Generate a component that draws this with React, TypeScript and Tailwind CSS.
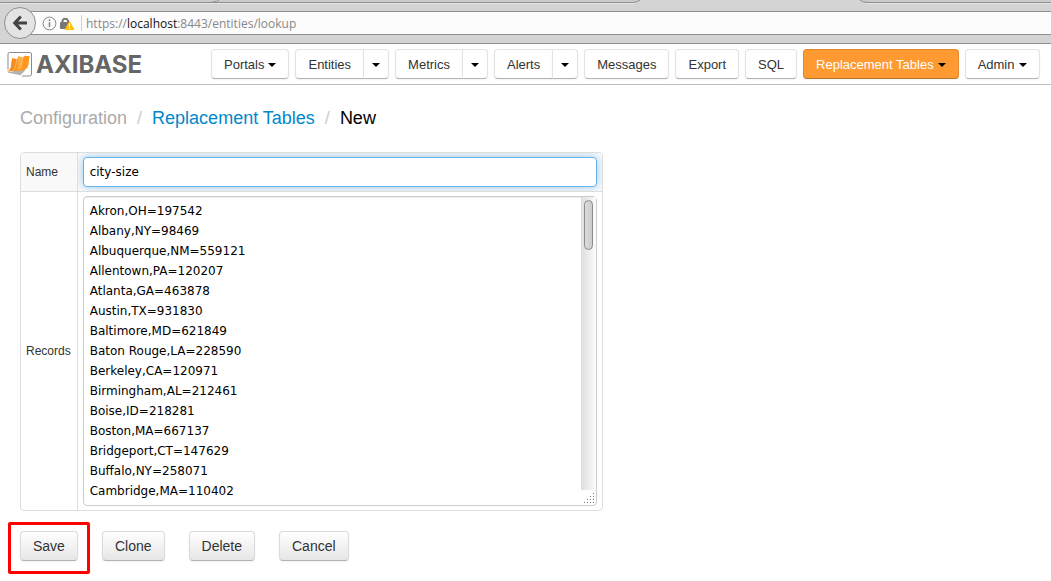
import React, { type ReactNode } from "react";

const records = [
  "Akron,OH=197542",
  "Albany,NY=98469",
  "Albuquerque,NM=559121",
  "Allentown,PA=120207",
  "Atlanta,GA=463878",
  "Austin,TX=931830",
  "Baltimore,MD=621849",
  "Baton Rouge,LA=228590",
  "Berkeley,CA=120971",
  "Birmingham,AL=212461",
  "Boise,ID=218281",
  "Boston,MA=667137",
  "Bridgeport,CT=147629",
  "Buffalo,NY=258071",
  "Cambridge,MA=110402",
].join("\n");

function Caret() {
  return <span aria-hidden="true" className="inline-block border-x-4 border-t-4 border-x-transparent border-t-black" />;
}

const navBase = "flex h-[30px] items-center gap-1 border pt-px text-[13px] leading-5 shadow-[0_1px_2px_rgba(0,0,0,0.05)]";
const navPlain = "border-[#e2e2e2] border-b-[#b3b3b3] bg-white text-[#333]";

function NavButton({ children, caret, active }: { children: ReactNode; caret?: boolean; active?: boolean }) {
  return (
    <button
      type="button"
      className={`${navBase} rounded px-3 ${active ? "border-[#e2892f] border-b-[#b3742f] bg-[#ff9a33] text-white" : navPlain}`}
    >
      {children}
      {caret && <Caret />}
    </button>
  );
}

function SplitButton({ children }: { children: string }) {
  return (
    <div className="flex">
      <button type="button" className={`${navBase} ${navPlain} rounded-l px-3`}>{children}</button>
      <button type="button" aria-label={`${children} menu`} className={`${navBase} ${navPlain} -ml-px rounded-r px-2`}>
        <Caret />
      </button>
    </div>
  );
}

function BrowserBar() {
  return (
    <div className="relative h-11 border-b border-[#8f8f8f] bg-[#d4d4d4] pt-[11px]">
      <svg aria-hidden="true" className="absolute left-0 top-0 h-1 w-full overflow-hidden" fill="none">
        <path d="M0 0H640L634 2.500H0zM860 0H2400V2.500H866z" fill="#cbcbcb" />
        <path d="M0 3.500H634M866 3.500H2400" stroke="#e6e6e6" />
        <path d="M0 2.500H632Q637 2.500 640 0M860 0Q863 2.500 868 2.500H2400" stroke="#8c8f91" />
        <path d="M213 2Q217 2 219 0" stroke="#8c8f91" />
      </svg>
      <div className="ml-7 flex h-6 items-center border-y border-[#8f8f8f] bg-[#fcfcfc] pl-3.5">
        <svg aria-hidden="true" width="15" height="15" viewBox="0 0 15 15" fill="none">
          <circle cx="7.5" cy="7.5" r="6.4" stroke="#8a8a8a" />
          <path d="M7.500 6.200v5" stroke="#8a8a8a" strokeWidth="1.6" />
          <circle cx="7.5" cy="4.2" r="1" fill="#8a8a8a" />
        </svg>
        <svg aria-hidden="true" className="ml-[3px]" width="15" height="15" viewBox="0 0 15 15">
          <path d="M2.500 7V4.600a3 3 0 0 1 5.500 0V7" fill="none" stroke="#777" strokeWidth="2" />
          <rect x="0" y="6" width="9" height="7" rx="1" fill="#777" />
          <path d="M9.500 5.500 13.900 13.500H5.100z" fill="#ffbf00" stroke="#ffbf00" strokeLinejoin="round" />
          <path d="M9.500 7.500v3.200M9.500 11.800v1.300" stroke="#fff" strokeWidth="1.3" />
        </svg>
        <span className="ml-1.5 h-4 w-px bg-[#d0d0d0]" />
        <div className="ml-1 pt-0.5 font-['Open_Sans',sans-serif] text-xs text-[#888]">
          https://<span className="text-[#111]">localhost</span>:8443/entities/lookup
        </div>
      </div>
      <button
        type="button"
        aria-label="Back"
        className="absolute left-1 top-[7px] flex size-8 items-center justify-center rounded-full border border-[#8f8f8f] bg-[#e4e4e4]"
      >
        <svg aria-hidden="true" width="16" height="16" viewBox="0 0 16 16" fill="none" stroke="#444" strokeWidth="3">
          <path d="M8.800 1.500 2.700 8l6.100 6.500M3 8h12" />
        </svg>
      </button>
    </div>
  );
}

function Logo() {
  return (
    <a href="#" className="flex w-[204px] items-center gap-[3px]">
      <svg aria-hidden="true" width="26" height="25" viewBox="0 0 26 25" fill="none">
        <path d="M1 17.500V2Q1 .5 2.500 .5H23Q24.500 .5 24.500 2V22Q24.500 24 22.500 24H15" stroke="#8b8b8b" />
        <path d="M0 20.500 12 18 19 17.500 13.500 23.200z" fill="#b3b3b3" />
        <path d="M0 19.800C5.500 17.500 3.800 10.500 5.300 6.200L10 7.200 11.500 4.200 16 5.800 17.500 3.800 23 4.200C20.800 8 23.300 14 18.500 17.200 13 20.300 6.500 18 0 19.800Z" fill="#ff951d" />
        <path d="M10 7.200C8.300 11 9.500 17 3.500 19.100L0 19.800C5.500 17.500 3.800 10.500 5.300 6.200Z" fill="#f98a1c" />
        <path d="M16 5.800C14 10 16 16 9.500 18.600 13 14 9.800 9 11.500 4.200Z" fill="#ffae45" />
        <path d="M10 7.200C8.500 11 9.500 16 5.500 18.800M16 5.800C14.200 10 16 15.500 11.500 18.500" stroke="#ffd08a" strokeWidth=".7" />
      </svg>
      <span className="pt-px font-[Inter,sans-serif] text-2xl font-bold leading-6 text-[#666]">AXIBASE</span>
    </a>
  );
}

function ScrollBar() {
  return (
    <div aria-hidden="true" className="pointer-events-none absolute inset-y-px right-px flex w-[15px] flex-col items-end">
      <div className="w-full flex-1 bg-linear-to-r from-[#dedede] to-[#fcfcfc] px-[3px] pt-[3px]">
        <div className="h-[50px] rounded-full border border-[#8c8c8c] bg-linear-to-r from-[#dcdcdc] to-[#cccccc]" />
      </div>
      <svg width="15" height="15" viewBox="0 0 15 15" fill="#777">
        <path d="M12 3h1v1h-1zM9 6h1v1H9zM12 6h1v1h-1zM6 9h1v1H6zM9 9h1v1H9zM12 9h1v1h-1zM3 12h1v1H3zM6 12h1v1H6zM9 12h1v1H9zM12 12h1v1h-1z" />
      </svg>
    </div>
  );
}

const formButton =
  "h-[30px] rounded border border-[#dadada] border-b-[#b3b3b3] bg-linear-to-b from-white to-[#e6e6e6] px-3 text-sm leading-5 text-[#333] shadow-[0_1px_2px_rgba(0,0,0,0.05)]";

export default function App() {
  return (
    <div className="min-h-screen bg-white font-['Liberation_Sans',Arial,sans-serif] text-[#333]">
      <BrowserBar />
      <header className="flex h-[41px] items-center border-b border-[#bfbfbf] pl-[7px]">
        <Logo />
        <nav className="flex shrink-0 gap-1.5">
          <NavButton caret>Portals</NavButton>
          <SplitButton>Entities</SplitButton>
          <SplitButton>Metrics</SplitButton>
          <SplitButton>Alerts</SplitButton>
          <NavButton>Messages</NavButton>
          <NavButton>Export</NavButton>
          <NavButton>SQL</NavButton>
          <NavButton caret active>Replacement Tables</NavButton>
          <NavButton caret>Admin</NavButton>
        </nav>
      </header>
      <main className="px-5 pt-[22px]">
        <ol className="flex gap-2.5 text-lg leading-[22px]">
          <li className="text-[#aaa]">Configuration</li>
          <li aria-hidden="true" className="text-[#ccc]">/</li>
          <li><a href="#" className="text-[#0088cc]">Replacement Tables</a></li>
          <li aria-hidden="true" className="text-[#ccc]">/</li>
          <li className="text-black">New</li>
        </ol>
        <form onSubmit={(e) => e.preventDefault()}>
          <div className="mt-[23px] w-fit overflow-hidden rounded border border-[#ddd]">
            <table className="border-collapse text-xs leading-5">
              <tbody>
                <tr className="bg-[#f9f9f9]">
                  <th scope="row" className="pl-[5px] pr-1.5 text-left font-normal"><label htmlFor="name">Name</label></th>
                  <td className="overflow-hidden border-l border-[#ddd] px-[5px] py-1">
                    <input
                      id="name"
                      defaultValue="city-size"
                      className="block h-[30px] w-[514px] rounded border border-[#66b3ee] bg-white px-1.5 font-['DejaVu_Sans',sans-serif] text-xs text-black shadow-[0_0_8px_rgba(82,168,236,0.6)] outline-none"
                    />
                  </td>
                </tr>
                <tr className="border-t border-[#ddd]">
                  <th scope="row" className="pl-[5px] pr-1.5 text-left font-normal"><label htmlFor="records">Records</label></th>
                  <td className="border-l border-[#ddd] px-[5px] py-1">
                    <div className="relative">
                      <textarea
                        id="records"
                        defaultValue={records}
                        className="block h-[310px] w-[514px] resize-none rounded border border-[#ccc] py-1 pl-1.5 pr-5 font-['DejaVu_Sans',sans-serif] text-xs leading-5 text-black shadow-[inset_0_1px_1px_rgba(0,0,0,0.075)] outline-none"
                      />
                      <ScrollBar />
                    </div>
                  </td>
                </tr>
              </tbody>
            </table>
          </div>
          <div className="mt-5 flex gap-6">
            <div className="relative">
              <button type="submit" className={formButton}>Save</button>
              <span aria-hidden="true" className="pointer-events-none absolute -bottom-[13px] -left-3 -right-3 -top-[9px] rounded-xs border-3 border-[#f00]" />
            </div>
            <button type="button" className={formButton}>Clone</button>
            <button type="button" className={formButton}>Delete</button>
            <button type="button" className={formButton}>Cancel</button>
          </div>
        </form>
      </main>
    </div>
  );
}
